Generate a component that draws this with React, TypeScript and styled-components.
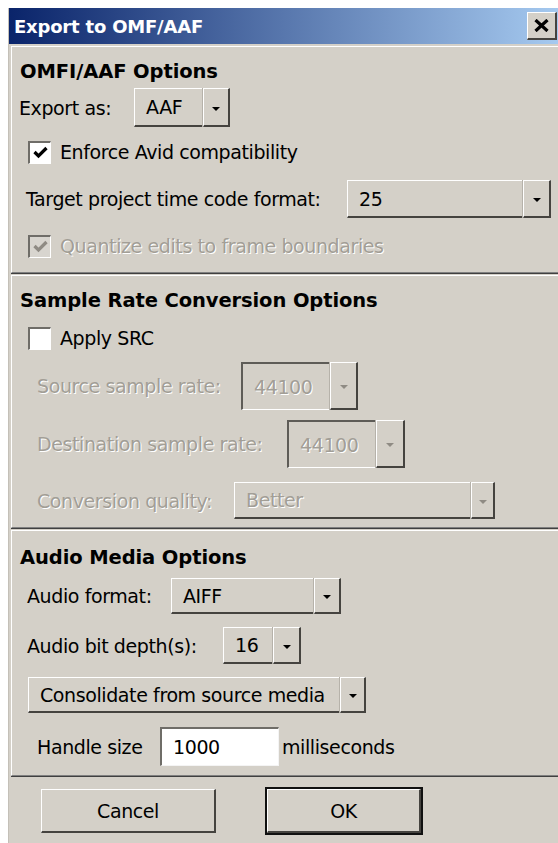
import React from "react";
import styled, { createGlobalStyle, css } from "styled-components";

const FONT = `"DejaVu Sans", Verdana, sans-serif`;
const FACE = "#d4d0c8";
const SHADOW = "#45433f";
const GREY_TEXT = "#a29e96";

const GlobalStyle = createGlobalStyle`
  html, body {
    margin: 0;
    padding: 0;
    background: #ffffff;
    overflow: hidden;
  }
`;

const Window = styled.div`
  margin: 8px 0 0 8px;
  width: 552px;
  height: 860px;
  box-sizing: border-box;
  background: ${FACE};
  border-left: 1px solid #c4c0b8;
  font-family: ${FONT};
  font-size: 19px;
  letter-spacing: -0.4px;
  color: #000;
`;

const TitleBar = styled.div`
  display: flex;
  align-items: center;
  justify-content: space-between;
  height: 36px;
  padding: 0 3px 0 5px;
  background: linear-gradient(to right, #0a246a 0%, #a6caf0 100%);
`;

const TitleText = styled.span`
  color: #ffffff;
  font-weight: bold;
  font-size: 18px;
  letter-spacing: -0.2px;
`;

const CloseButton = styled.span`
  display: flex;
  align-items: center;
  justify-content: center;
  width: 30px;
  height: 28px;
  box-sizing: border-box;
  background: ${FACE};
  border-top: 1px solid #ffffff;
  border-left: 1px solid #ffffff;
  border-right: 2px solid ${SHADOW};
  border-bottom: 2px solid ${SHADOW};
`;

const Body = styled.div`
  padding: 2px 0 0 2px;
`;

const Section = styled.section<{ $pb: number; $mt?: number }>`
  display: flex;
  flex-direction: column;
  margin-top: ${(p) => p.$mt ?? 0}px;
  padding-bottom: ${(p) => p.$pb}px;
  border-top: 1px solid #ffffff;
  border-left: 1px solid #ffffff;
  border-bottom: 1px solid #808080;
  box-shadow: 0 1px 0 #404040;
`;

const Heading = styled.div<{ $mt: number }>`
  display: flex;
  align-items: center;
  height: 30px;
  margin-top: ${(p) => p.$mt}px;
  padding-left: 8px;
  font-weight: bold;
  font-size: 19.5px;
  letter-spacing: -0.1px;
`;

const Row = styled.div<{ $mt: number; $h: number; $indent: number }>`
  display: flex;
  align-items: center;
  height: ${(p) => p.$h}px;
  margin-top: ${(p) => p.$mt}px;
  padding-left: ${(p) => p.$indent}px;
  white-space: nowrap;
`;

const Label = styled.span<{ $w?: number; $gap?: number; $disabled?: boolean }>`
  flex-shrink: 0;
  width: ${(p) => (p.$w ? `${p.$w}px` : "auto")};
  margin-left: ${(p) => p.$gap ?? 0}px;
  ${(p) =>
    p.$disabled &&
    css`
      color: ${GREY_TEXT};
      text-shadow: 1px 1px 0 #ffffff;
    `}
`;

const ComboFrame = styled.div<{ $w: number }>`
  display: flex;
  flex-shrink: 0;
  width: ${(p) => p.$w}px;
  height: 100%;
`;

const ComboField = styled.div<{ $sunken?: boolean; $disabled?: boolean }>`
  flex: 1;
  display: flex;
  align-items: center;
  padding-left: 11px;
  box-sizing: border-box;
  ${(p) =>
    p.$sunken
      ? css`
          border-top: 2px solid #5e5c57;
          border-left: 2px solid #5e5c57;
          border-bottom: 1px solid #ffffff;
        `
      : css`
          border-top: 1px solid #ffffff;
          border-left: 1px solid #ffffff;
          border-bottom: 2px solid ${SHADOW};
        `}
  ${(p) =>
    p.$disabled &&
    css`
      color: ${GREY_TEXT};
      text-shadow: 1px 1px 0 #ffffff;
    `}
`;

const ComboArrow = styled.div<{ $w: number; $disabled?: boolean }>`
  display: flex;
  align-items: center;
  justify-content: center;
  width: ${(p) => p.$w}px;
  box-sizing: border-box;
  border-top: 1px solid #ffffff;
  border-left: 1px solid #ffffff;
  border-right: 2px solid ${SHADOW};
  border-bottom: 2px solid ${SHADOW};
  box-shadow: -1px 0 0 #b6b2aa;

  &::after {
    content: "";
    margin-top: 3px;
    border-left: 4px solid transparent;
    border-right: 4px solid transparent;
    border-top: 4px solid ${(p) => (p.$disabled ? "#8f8b84" : "#000000")};
  }
`;

const CheckBox = styled.span<{ $disabled?: boolean }>`
  display: flex;
  align-items: center;
  justify-content: center;
  flex-shrink: 0;
  width: 23px;
  height: 23px;
  margin-right: 9px;
  box-sizing: border-box;
  border-top: 2px solid #6f6d68;
  border-left: 2px solid #6f6d68;
  border-right: 1px solid #ffffff;
  border-bottom: 1px solid #ffffff;
  background: ${(p) => (p.$disabled ? "#d8d5cf" : "#ffffff")};
`;

const TextInput = styled.div<{ $w: number }>`
  display: flex;
  align-items: center;
  flex-shrink: 0;
  width: ${(p) => p.$w}px;
  height: 100%;
  padding-left: 11px;
  box-sizing: border-box;
  background: #ffffff;
  border-top: 2px solid #6f6d68;
  border-left: 2px solid #6f6d68;
  border-right: 1px solid #f4f4f4;
  border-bottom: 1px solid #f4f4f4;
`;

const ButtonRow = styled.div`
  display: flex;
  gap: 51px;
  margin-top: 13px;
  padding-left: 30px;
`;

const Button = styled.button<{ $w: number; $default?: boolean }>`
  width: ${(p) => p.$w}px;
  height: 44px;
  box-sizing: border-box;
  padding: 0;
  background: ${FACE};
  font-family: ${FONT};
  font-size: 19px;
  letter-spacing: -0.4px;
  color: #000;
  border-top: 1px solid #ffffff;
  border-left: 1px solid #ffffff;
  border-right: 2px solid ${SHADOW};
  border-bottom: 2px solid ${SHADOW};
  ${(p) =>
    p.$default &&
    css`
      outline: 2px solid #111111;
      outline-offset: 0;
    `}
`;

type ComboProps = {
  value: string;
  width: number;
  arrow?: number;
  sunken?: boolean;
  disabled?: boolean;
};

const Combo = ({ value, width, arrow = 26, sunken, disabled }: ComboProps) => (
  <ComboFrame $w={width}>
    <ComboField $sunken={sunken} $disabled={disabled}>
      {value}
    </ComboField>
    <ComboArrow $w={arrow} $disabled={disabled} />
  </ComboFrame>
);

const Check = ({ checked, disabled }: { checked?: boolean; disabled?: boolean }) => (
  <CheckBox $disabled={disabled}>
    {checked && (
      <svg width="15" height="13" viewBox="0 0 15 13">
        <path
          d="M1.5 6 L5.5 10 L13.5 2"
          fill="none"
          stroke={disabled ? "#8f8b84" : "#000"}
          strokeWidth="3.2"
        />
      </svg>
    )}
  </CheckBox>
);

const App = () => {
  return (
    <>
      <GlobalStyle />
      <Window>
        <TitleBar>
          <TitleText>Export to OMF/AAF</TitleText>
          <CloseButton>
            <svg width="15" height="13" viewBox="0 0 15 13">
              <path d="M1.5 1 L13.5 12 M13.5 1 L1.5 12" stroke="#000" strokeWidth="3.2" />
            </svg>
          </CloseButton>
        </TitleBar>

        <Body>
          <Section $pb={11}>
            <Heading $mt={9}>OMFI/AAF Options</Heading>
            <Row $mt={2} $h={39} $indent={7}>
              <Label $w={115}>Export as:</Label>
              <Combo value="AAF" width={96} arrow={27} />
            </Row>
            <Row $mt={10} $h={30} $indent={16}>
              <Check checked />
              <Label>Enforce Avid compatibility</Label>
            </Row>
            <Row $mt={13} $h={38} $indent={14}>
              <Label $w={321}>Target project time code format:</Label>
              <Combo value="25" width={204} arrow={28} />
            </Row>
            <Row $mt={13} $h={30} $indent={16}>
              <Check checked disabled />
              <Label $disabled>Quantize edits to frame boundaries</Label>
            </Row>
          </Section>

          <Section $pb={8} $mt={2}>
            <Heading $mt={9}>Sample Rate Conversion Options</Heading>
            <Row $mt={8} $h={30} $indent={16}>
              <Check />
              <Label>Apply SRC</Label>
            </Row>
            <Row $mt={9} $h={48} $indent={25}>
              <Label $w={204} $disabled>
                Source sample rate:
              </Label>
              <Combo value="44100" width={117} arrow={28} sunken disabled />
            </Row>
            <Row $mt={10} $h={48} $indent={25}>
              <Label $w={250} $disabled>
                Destination sample rate:
              </Label>
              <Combo value="44100" width={118} arrow={29} sunken disabled />
            </Row>
            <Row $mt={14} $h={37} $indent={25}>
              <Label $w={197} $disabled>
                Conversion quality:
              </Label>
              <Combo value="Better" width={261} arrow={24} disabled />
            </Row>
          </Section>

          <Section $pb={9} $mt={2}>
            <Heading $mt={11}>Audio Media Options</Heading>
            <Row $mt={6} $h={36} $indent={15}>
              <Label $w={144}>Audio format:</Label>
              <Combo value="AIFF" width={170} arrow={27} />
            </Row>
            <Row $mt={13} $h={37} $indent={15}>
              <Label $w={196}>Audio bit depth(s):</Label>
              <Combo value="16" width={78} arrow={28} />
            </Row>
            <Row $mt={13} $h={36} $indent={16}>
              <Combo value="Consolidate from source media" width={338} arrow={26} />
            </Row>
            <Row $mt={14} $h={39} $indent={25}>
              <Label $w={123}>Handle size</Label>
              <TextInput $w={119}>1000</TextInput>
              <Label $gap={3}>milliseconds</Label>
            </Row>
          </Section>

          <ButtonRow>
            <Button $w={175}>Cancel</Button>
            <Button $w={154} $default>
              OK
            </Button>
          </ButtonRow>
        </Body>
      </Window>
    </>
  );
};

export default App;
